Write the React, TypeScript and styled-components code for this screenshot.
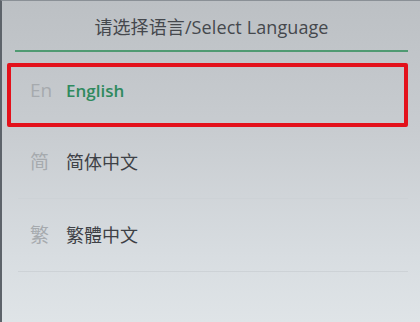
import styled, { createGlobalStyle } from "styled-components";

const GlobalStyle = createGlobalStyle`
    html, body {
        margin: 0;
        padding: 0;
        height: 100%;
        overflow: hidden;
    }
    #root {
        height: 100%;
    }
`;

const Screen = styled.div`
    height: 322px;
    width: 420px;
    box-sizing: border-box;
    border-left: 2px solid #5d636a;
    border-top: 1px solid #8a9096;
    background: linear-gradient(180deg, #bcc0c4 0%, #c8ccd0 40%, #d8dde1 80%, #dfe4e7 100%);
    font-family: "Open Sans", "Noto Sans CJK SC", sans-serif;
    display: flex;
    flex-direction: column;
`;

const Header = styled.header`
    height: 49px;
    margin: 0 12px 0 13px;
    border-bottom: 2px solid #4f9a72;
    display: flex;
    justify-content: center;
    align-items: center;
    color: #45484d;
    font-size: 18px;
    letter-spacing: 0.1px;
`;

const List = styled.ul`
    list-style: none;
    margin: 0;
    padding: 0 12px 0 5px;
`;

const Item = styled.li`
    height: 64px;
    padding: 0 0 10px 19px;
    margin-top: 11px;
    margin-bottom: -1px;
    display: flex;
    align-items: center;
    box-sizing: border-box;
    border: 4px solid #e3111b;
    border-radius: 2px;
`;

const Row = styled.div`
    height: 73px;
    margin-left: 11px;
    padding-left: 12px;
    padding-bottom: 2px;
    box-sizing: border-box;
    display: flex;
    align-items: center;
    border-bottom: 1px solid #cdd2d6;
`;

const Prefix = styled.span`
    width: 36px;
    color: #a6aaae;
    font-size: 19px;
`;

const Label = styled.span<{ $active?: boolean }>`
    color: ${(p) => (p.$active ? "#2f8a5e" : "#3e4146")};
    font-size: ${(p) => (p.$active ? "17px" : "18px")};
    font-weight: ${(p) => (p.$active ? 600 : 400)};
`;

const languages = [
    { prefix: "简", label: "简体中文" },
    { prefix: "繁", label: "繁體中文" },
];

function App() {
    return <>
        <GlobalStyle />
        <Screen>
            <Header>请选择语言/Select Language</Header>
            <List>
                <Item>
                    <Prefix>En</Prefix>
                    <Label $active>English</Label>
                </Item>
                {languages.map((lang) =>
                    <Row key={lang.label}>
                        <Prefix>{lang.prefix}</Prefix>
                        <Label>{lang.label}</Label>
                    </Row>)}
            </List>
        </Screen>
    </>
}

export default App;
